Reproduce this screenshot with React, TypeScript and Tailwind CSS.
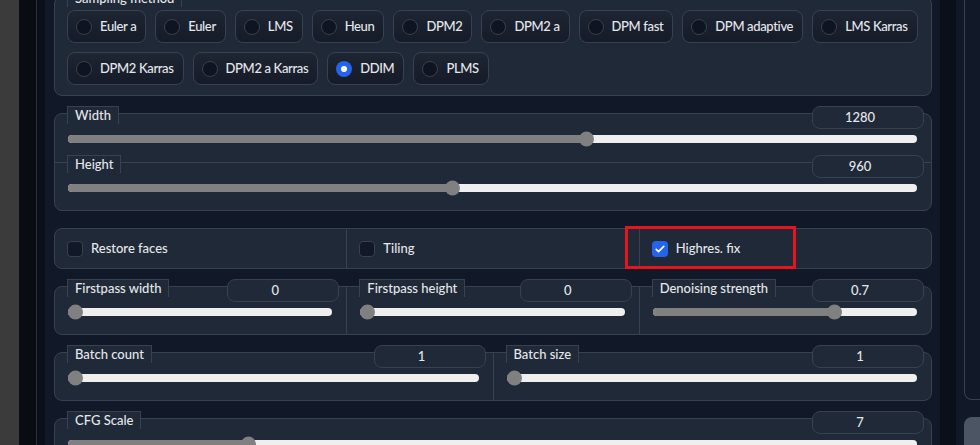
import React from "react";

const samplerRows = [
  ["Euler a", "Euler", "LMS", "Heun", "DPM2", "DPM2 a", "DPM fast", "DPM adaptive", "LMS Karras"],
  ["DPM2 Karras", "DPM2 a Karras", "DDIM", "PLMS"],
];

const Radio = ({ label, checked }: { label: string; checked?: boolean }) => (
  <label className="flex items-center h-[33px] pl-[8px] pr-[9px] gap-[8px] rounded-[8px] border border-[#374151] bg-linear-to-b from-[#1e2533] to-[#151b28] text-[13px] font-medium tracking-[-0.35px] text-[#e5e7eb] whitespace-nowrap">
    {checked ? (
      <span className="w-[16px] h-[16px] rounded-full bg-[#2563eb] flex items-center justify-center">
        <span className="w-[6px] h-[6px] rounded-full bg-white" />
      </span>
    ) : (
      <span className="w-[16px] h-[16px] rounded-full border border-[#374151] bg-[#0f1520]" />
    )}
    {label}
  </label>
);

type SliderProps = {
  label: string;
  value: string;
  frac: number;
  tall?: boolean;
  divider?: boolean;
};

const Slider = ({ label, value, frac, tall, divider }: SliderProps) => (
  <div className={`flex-1 ${tall ? "h-[48px]" : "h-[47px]"} ${divider ? "border-l border-[#374151]" : ""}`}>
    <div className="flex justify-between items-start -mt-[8px] pl-[12px] pr-[7px]">
      <span className="h-[18px] px-[7px] border border-b-0 border-[#374151] bg-[#1f2937] text-[13px] font-medium leading-[17px] text-[#e5e7eb]">
        {label}
      </span>
      <div className="w-[112px] h-[23px] rounded-[8px] border border-[#374151] bg-[#1f2937] pr-[16px] text-center text-[13px] font-medium leading-[21px] text-[#e5e7eb]">
        {value}
      </div>
    </div>
    <div className="relative mt-[6px] ml-[13px] mr-[14px] h-[8px] rounded-full bg-[#efefef]">
      <div
        className="absolute left-0 top-0 h-full rounded-l-full bg-[#808080]"
        style={{ width: `calc((100% - 15px) * ${frac} + 7px)` }}
      />
      <div
        className="absolute top-1/2 -translate-y-1/2 w-[15px] h-[15px] rounded-full bg-[#808080]"
        style={{ left: `calc((100% - 15px) * ${frac})` }}
      />
    </div>
  </div>
);

const Check = ({ label, checked, divider, marked }: { label: string; checked?: boolean; divider?: boolean; marked?: boolean }) => (
  <div className={`relative flex-1 flex items-center pl-[12px] gap-[8px] ${divider ? "border-l border-[#374151]" : ""}`}>
    {checked ? (
      <span className="w-[16px] h-[16px] rounded-[4px] bg-[#2563eb] flex items-center justify-center">
        <svg viewBox="0 0 16 16" className="w-[12px] h-[12px]" fill="none">
          <path d="M3 8.5l3 3 7-7" stroke="white" strokeWidth="2.2" strokeLinecap="round" strokeLinejoin="round" />
        </svg>
      </span>
    ) : (
      <span className="w-[16px] h-[16px] rounded-[4px] border border-[#374151] bg-[#111827]" />
    )}
    <span className="text-[13px] font-medium text-[#e5e7eb]">{label}</span>
    {marked && <div className="absolute -left-[15px] -top-[3px] w-[171px] h-[43px] border-[3px] border-[#e8141c]" />}
  </div>
);

const block = "shrink-0 rounded-lg border border-[#374151] bg-[#1f2937]";

export default function App() {
  return (
    <div className="w-[980px] h-[445px] overflow-hidden flex bg-[#0b0f19] [font-family:Lato,'Noto_Sans',sans-serif]">
      <div className="w-[19px] bg-[#3b3b3b]" />
      <div className="w-[18px] bg-[#090c13] border-r border-[#2b303b]" />
      <div className="w-[8px] bg-[#0b0f19]" />

      <main className="w-[895px] bg-[#111827] pl-[9px] pr-[8px] flex flex-col gap-[17px]">
        <section className={`${block} -mt-[4px] pb-[10px]`}>
          <div className="flex -mt-[8px] pl-[12px]">
            <span className="h-[18px] px-[7px] border border-b-0 border-[#374151] bg-[#1f2937] text-[13px] font-medium leading-[17px] text-[#e5e7eb]">
              Sampling method
            </span>
          </div>
          <div className="mt-[3px] px-[12px] flex flex-col gap-[9px]">
            {samplerRows.map((row, i) => (
              <div key={i} className="flex gap-[9px]">
                {row.map((s) => (
                  <Radio key={s} label={s} checked={s === "DDIM"} />
                ))}
              </div>
            ))}
          </div>
        </section>

        <section className={block}>
          <div className="flex">
            <Slider label="Width" value="1280" frac={(1280 - 64) / 1984} tall />
          </div>
          <div className="flex border-t border-[#374151]">
            <Slider label="Height" value="960" frac={(960 - 64) / 1984} />
          </div>
        </section>

        <section className={`${block} flex h-[41px]`}>
          <Check label="Restore faces" />
          <Check label="Tiling" divider />
          <Check label="Highres. fix" checked divider marked />
        </section>

        <section className={`${block} flex`}>
          <Slider label="Firstpass width" value="0" frac={0} />
          <Slider label="Firstpass height" value="0" frac={0} divider />
          <Slider label="Denoising strength" value="0.7" frac={0.7} divider />
        </section>

        <section className={`${block} flex`}>
          <Slider label="Batch count" value="1" frac={0} />
          <Slider label="Batch size" value="1" frac={0} divider />
        </section>

        <section className={`${block} flex`}>
          <Slider label="CFG Scale" value="7" frac={6 / 29} />
        </section>
      </main>

      <div className="w-[16px] bg-[#0b0f19]" />
      <aside className="flex-1 bg-[#111827] pl-[8px] flex flex-col">
        <div className="h-[400px] shrink-0 border-l border-b border-[#374151] rounded-bl-lg" />
        <div className="mt-[17px] flex-1 bg-[#4b5563] rounded-tl-lg" />
      </aside>
    </div>
  );
}
